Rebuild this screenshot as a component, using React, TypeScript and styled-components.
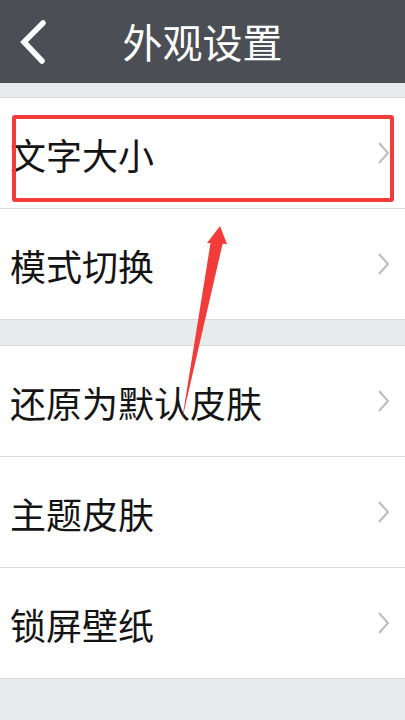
import * as React from "react";
import styled, { createGlobalStyle } from "styled-components";

const GlobalStyle = createGlobalStyle`
  html, body {
    margin: 0;
    padding: 0;
    background: #e7ebec;
    font-family: "Noto Sans CJK SC", "Noto Sans", sans-serif;
  }
`;

const Screen = styled.div`
  position: relative;
  width: 405px;
  height: 720px;
  overflow: hidden;
  background: #e7ebec;
`;

const Header = styled.header`
  height: 83px;
  background: #4b4e54;
  display: flex;
  align-items: center;
  justify-content: center;
  position: relative;
`;

const BackButton = styled.button`
  position: absolute;
  left: 14px;
  top: 16px;
  width: 40px;
  height: 52px;
  padding: 0;
  border: none;
  background: none;
  display: flex;
  align-items: center;
  justify-content: center;
`;

const Title = styled.h1`
  margin: 0;
  color: #ffffff;
  font-size: 40px;
  font-weight: 400;
  line-height: 1;
  padding-bottom: 2px;
`;

const Section = styled.section<{ $gap: number }>`
  margin-top: ${({ $gap }) => $gap}px;
  background: #ffffff;
  border-top: 1px solid #d6d8d9;
`;

const Row = styled.div`
  height: 110px;
  border-bottom: 1px solid #d6d8d9;
  display: flex;
  align-items: center;
  justify-content: space-between;
  padding: 0 14px 0 10px;
`;

const Label = styled.span`
  font-size: 36px;
  color: #141414;
  line-height: 1;
  padding-top: 1px;
`;

const Highlight = styled.div`
  position: absolute;
  left: 12px;
  top: 115px;
  width: 374px;
  height: 79px;
  border: 4px solid #f23c3c;
  border-radius: 3px;
`;

const ArrowLayer = styled.svg`
  position: absolute;
  left: 0;
  top: 0;
  pointer-events: none;
`;

function Chevron() {
  return (
    <svg width="14" height="24" viewBox="0 0 14 24">
      <polyline
        points="2,2 11,12 2,22"
        fill="none"
        stroke="#bcbcbc"
        strokeWidth="2"
      />
    </svg>
  );
}

const groups = [
  { gap: 14, items: ["文字大小", "模式切换"] },
  { gap: 25, items: ["还原为默认皮肤", "主题皮肤", "锁屏壁纸"] },
];

export default function App() {
  return (
    <Screen>
      <GlobalStyle />
      <Header>
        <BackButton>
          <svg width="40" height="52" viewBox="0 0 40 52">
            <polyline
              points="29,7 10,26 28,45"
              fill="none"
              stroke="#ffffff"
              strokeWidth="5.5"
              strokeLinecap="round"
              strokeLinejoin="miter"
            />
          </svg>
        </BackButton>
        <Title>外观设置</Title>
      </Header>
      {groups.map((g, i) => (
        <Section key={i} $gap={g.gap}>
          {g.items.map((t) => (
            <Row key={t}>
              <Label>{t}</Label>
              <Chevron />
            </Row>
          ))}
        </Section>
      ))}
      <Highlight />
      <ArrowLayer width="405" height="720" viewBox="0 0 405 720">
        <polygon points="182,420 211,240 223,242" fill="#f23c3c" />
        <polygon points="220,226 207,243 227,244" fill="#f23c3c" />
      </ArrowLayer>
    </Screen>
  );
}
